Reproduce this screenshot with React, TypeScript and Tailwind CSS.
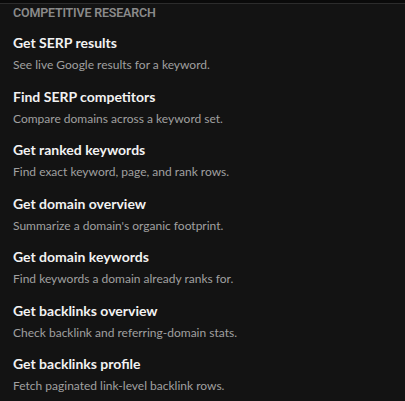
const tools = [
  { title: 'Get SERP results', desc: 'See live Google results for a keyword.' },
  { title: 'Find SERP competitors', desc: 'Compare domains across a keyword set.' },
  { title: 'Get ranked keywords', desc: 'Find exact keyword, page, and rank rows.' },
  { title: 'Get domain overview', desc: "Summarize a domain's organic footprint." },
  { title: 'Get domain keywords', desc: 'Find keywords a domain already ranks for.' },
  { title: 'Get backlinks overview', desc: 'Check backlink and referring-domain stats.' },
  { title: 'Get backlinks profile', desc: 'Fetch paginated link-level backlink rows.' },
];

export default function App() {
  return (
    <div className="w-[405px] h-[401px] overflow-hidden bg-[#131313] font-['Lato',sans-serif]">
      <div className="h-[4px] bg-[#0a0a0a] border-b border-[#2c2c2c]" />
      {/* section header */}
      <div className="px-[13px] pt-[1px] h-[22px] leading-[16px] text-[12.5px] font-semibold tracking-[-0.2px] font-['Roboto',sans-serif] text-[#8a8a8a] uppercase">
        Competitive Research
      </div>
      <div className="flex flex-col">
        {tools.map((t) => (
          <div key={t.title} className="px-[13px] pt-[7px] h-[53.5px]">
            <div className="text-[14px] leading-[20px] font-bold text-[#f2f2f2]">{t.title}</div>
            <div className="mt-[3px] text-[12px] leading-[18px] text-[#a0a0a0]">{t.desc}</div>
          </div>
        ))}
      </div>
    </div>
  );
}
